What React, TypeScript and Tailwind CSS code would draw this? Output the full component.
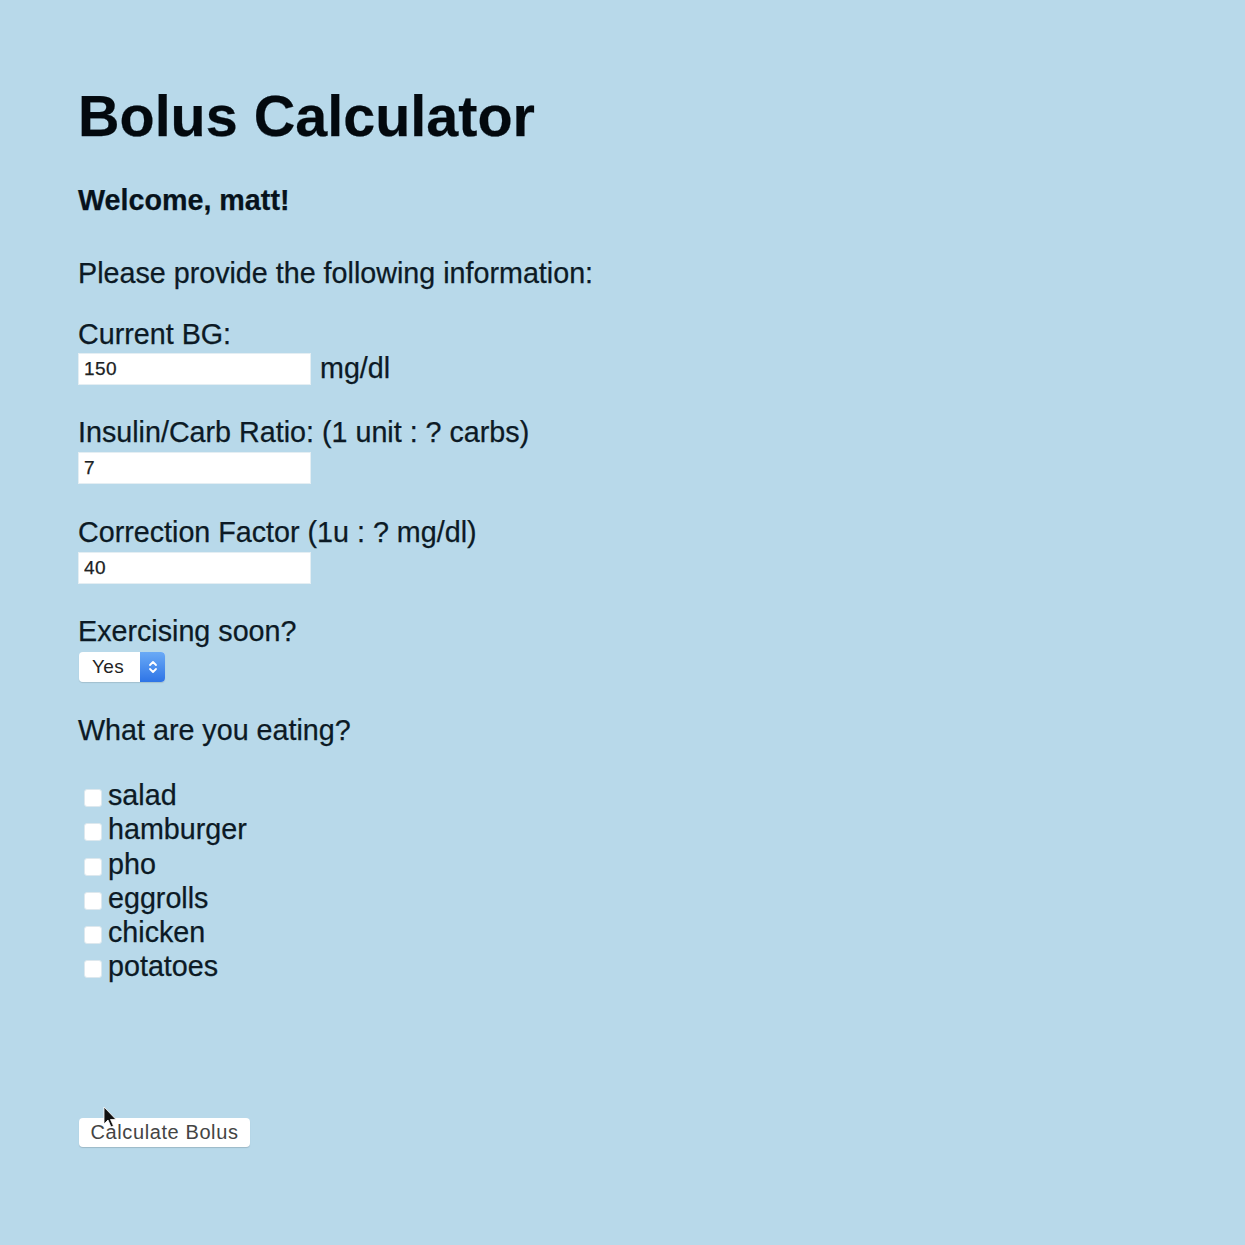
import React, { useState } from 'react';

const foods = ['salad', 'hamburger', 'pho', 'eggrolls', 'chicken', 'potatoes'];

const TextField: React.FC<{ value: string; onChange: (v: string) => void }> = ({ value, onChange }) => (
  <input
    type="text"
    value={value}
    onChange={(e) => onChange(e.target.value)}
    className="w-[233px] h-[32px] bg-white px-[5px] text-[19px] tracking-[0.4px] text-[#222] font-['Liberation_Sans',Arial,sans-serif] outline-none border border-[#e4eef3]"
  />
);

export default function App() {
  const [bg, setBg] = useState('150');
  const [ratio, setRatio] = useState('7');
  const [factor, setFactor] = useState('40');
  const [exercise, setExercise] = useState('Yes');
  const [eating, setEating] = useState<string[]>([]);

  const toggle = (food: string) => {
    setEating((prev) => (prev.includes(food) ? prev.filter((f) => f !== food) : [...prev, food]));
  };

  return (
    <div className="min-h-[1245px] w-full bg-[#b8d9ea] font-['Liberation_Sans',Arial,sans-serif] text-[#0c1a25] [-webkit-text-stroke:0.25px_#0c1a25]">
      <div className="flex flex-col items-start pl-[78px] pt-[84px]">
        <h1 className="text-[57.5px] leading-[64px] font-bold text-[#03090e]">Bolus Calculator</h1>

        <div className="mt-[36px] text-[28.7px] leading-[33px] font-bold text-[#07121b]">Welcome, matt!</div>

        <p className="mt-[40px] text-[28.7px] leading-[33px]">Please provide the following information:</p>

        {/* Current BG */}
        <label className="mt-[28px] text-[28.7px] leading-[33px]">Current BG:</label>
        <div className="mt-[2px] flex items-start">
          <TextField value={bg} onChange={setBg} />
          <span className="ml-[9px] -mt-[1px] text-[28.7px] leading-[33px]">mg/dl</span>
        </div>

        {/* Ratio */}
        <label className="mt-[31px] text-[28.7px] leading-[33px]">Insulin/Carb Ratio: (1 unit : ? carbs)</label>
        <div className="mt-[3px]">
          <TextField value={ratio} onChange={setRatio} />
        </div>

        {/* Correction */}
        <label className="mt-[32px] text-[28.7px] leading-[33px]">Correction Factor (1u : ? mg/dl)</label>
        <div className="mt-[3px]">
          <TextField value={factor} onChange={setFactor} />
        </div>

        {/* Exercise */}
        <label className="mt-[31px] text-[28.7px] leading-[33px]">Exercising soon?</label>
        <div className="relative mt-[4px] ml-[1px] h-[30px] w-[86px] rounded-[4px] shadow-[0_1px_1px_rgba(0,0,0,0.12)] [-webkit-text-stroke:0]">
          <select
            value={exercise}
            onChange={(e) => setExercise(e.target.value)}
            className="h-full w-full appearance-none rounded-[4px] bg-white pl-[13px] text-[19px] tracking-[0.4px] text-[#222] outline-none"
          >
            <option>Yes</option>
            <option>No</option>
          </select>
          <div className="pointer-events-none absolute right-0 top-0 flex h-full w-[25px] items-center justify-center rounded-r-[4px] bg-gradient-to-b from-[#6aaaf6] to-[#2e74e6]">
            <svg width="10" height="16" viewBox="0 0 10 16" fill="none" stroke="white" strokeWidth="1.8" strokeLinecap="round" strokeLinejoin="round">
              <path d="M2 6 L5 3 L8 6" />
              <path d="M2 10 L5 13 L8 10" />
            </svg>
          </div>
        </div>

        {/* Eating */}
        <label className="mt-[32px] text-[28.7px] leading-[33px]">What are you eating?</label>
        <div className="mt-[31px] flex flex-col">
          {foods.map((food) => (
            <label key={food} className="flex items-start text-[28.7px] leading-[34.3px]">
              <input
                type="checkbox"
                checked={eating.includes(food)}
                onChange={() => toggle(food)}
                className="ml-[6px] mt-[11px] h-[18px] w-[18px] appearance-none rounded-[3px] bg-white border border-[#dde8ee] checked:bg-[#2e74e6]"
              />
              <span className="ml-[6px]">{food}</span>
            </label>
          ))}
        </div>

        {/* Submit */}
        <div className="relative mt-[134px] ml-[1px] [-webkit-text-stroke:0]">
          <button className="h-[29px] w-[171px] rounded-[4px] bg-white text-[20px] tracking-[0.6px] leading-[29px] text-[#444] shadow-[0_1px_1px_rgba(0,0,0,0.15)]">
            Calculate Bolus
          </button>
          <svg
            className="pointer-events-none absolute left-[24px] top-[-12px]"
            width="15"
            height="23"
            viewBox="0 0 15 23"
          >
            <path d="M1 1 L1 18 L5 14 L8 21 L10.5 20 L7.5 13.5 L13 13.5 Z" fill="#111" stroke="#fff" strokeWidth="0.8" strokeLinejoin="round" />
          </svg>
        </div>
      </div>
    </div>
  );
}
